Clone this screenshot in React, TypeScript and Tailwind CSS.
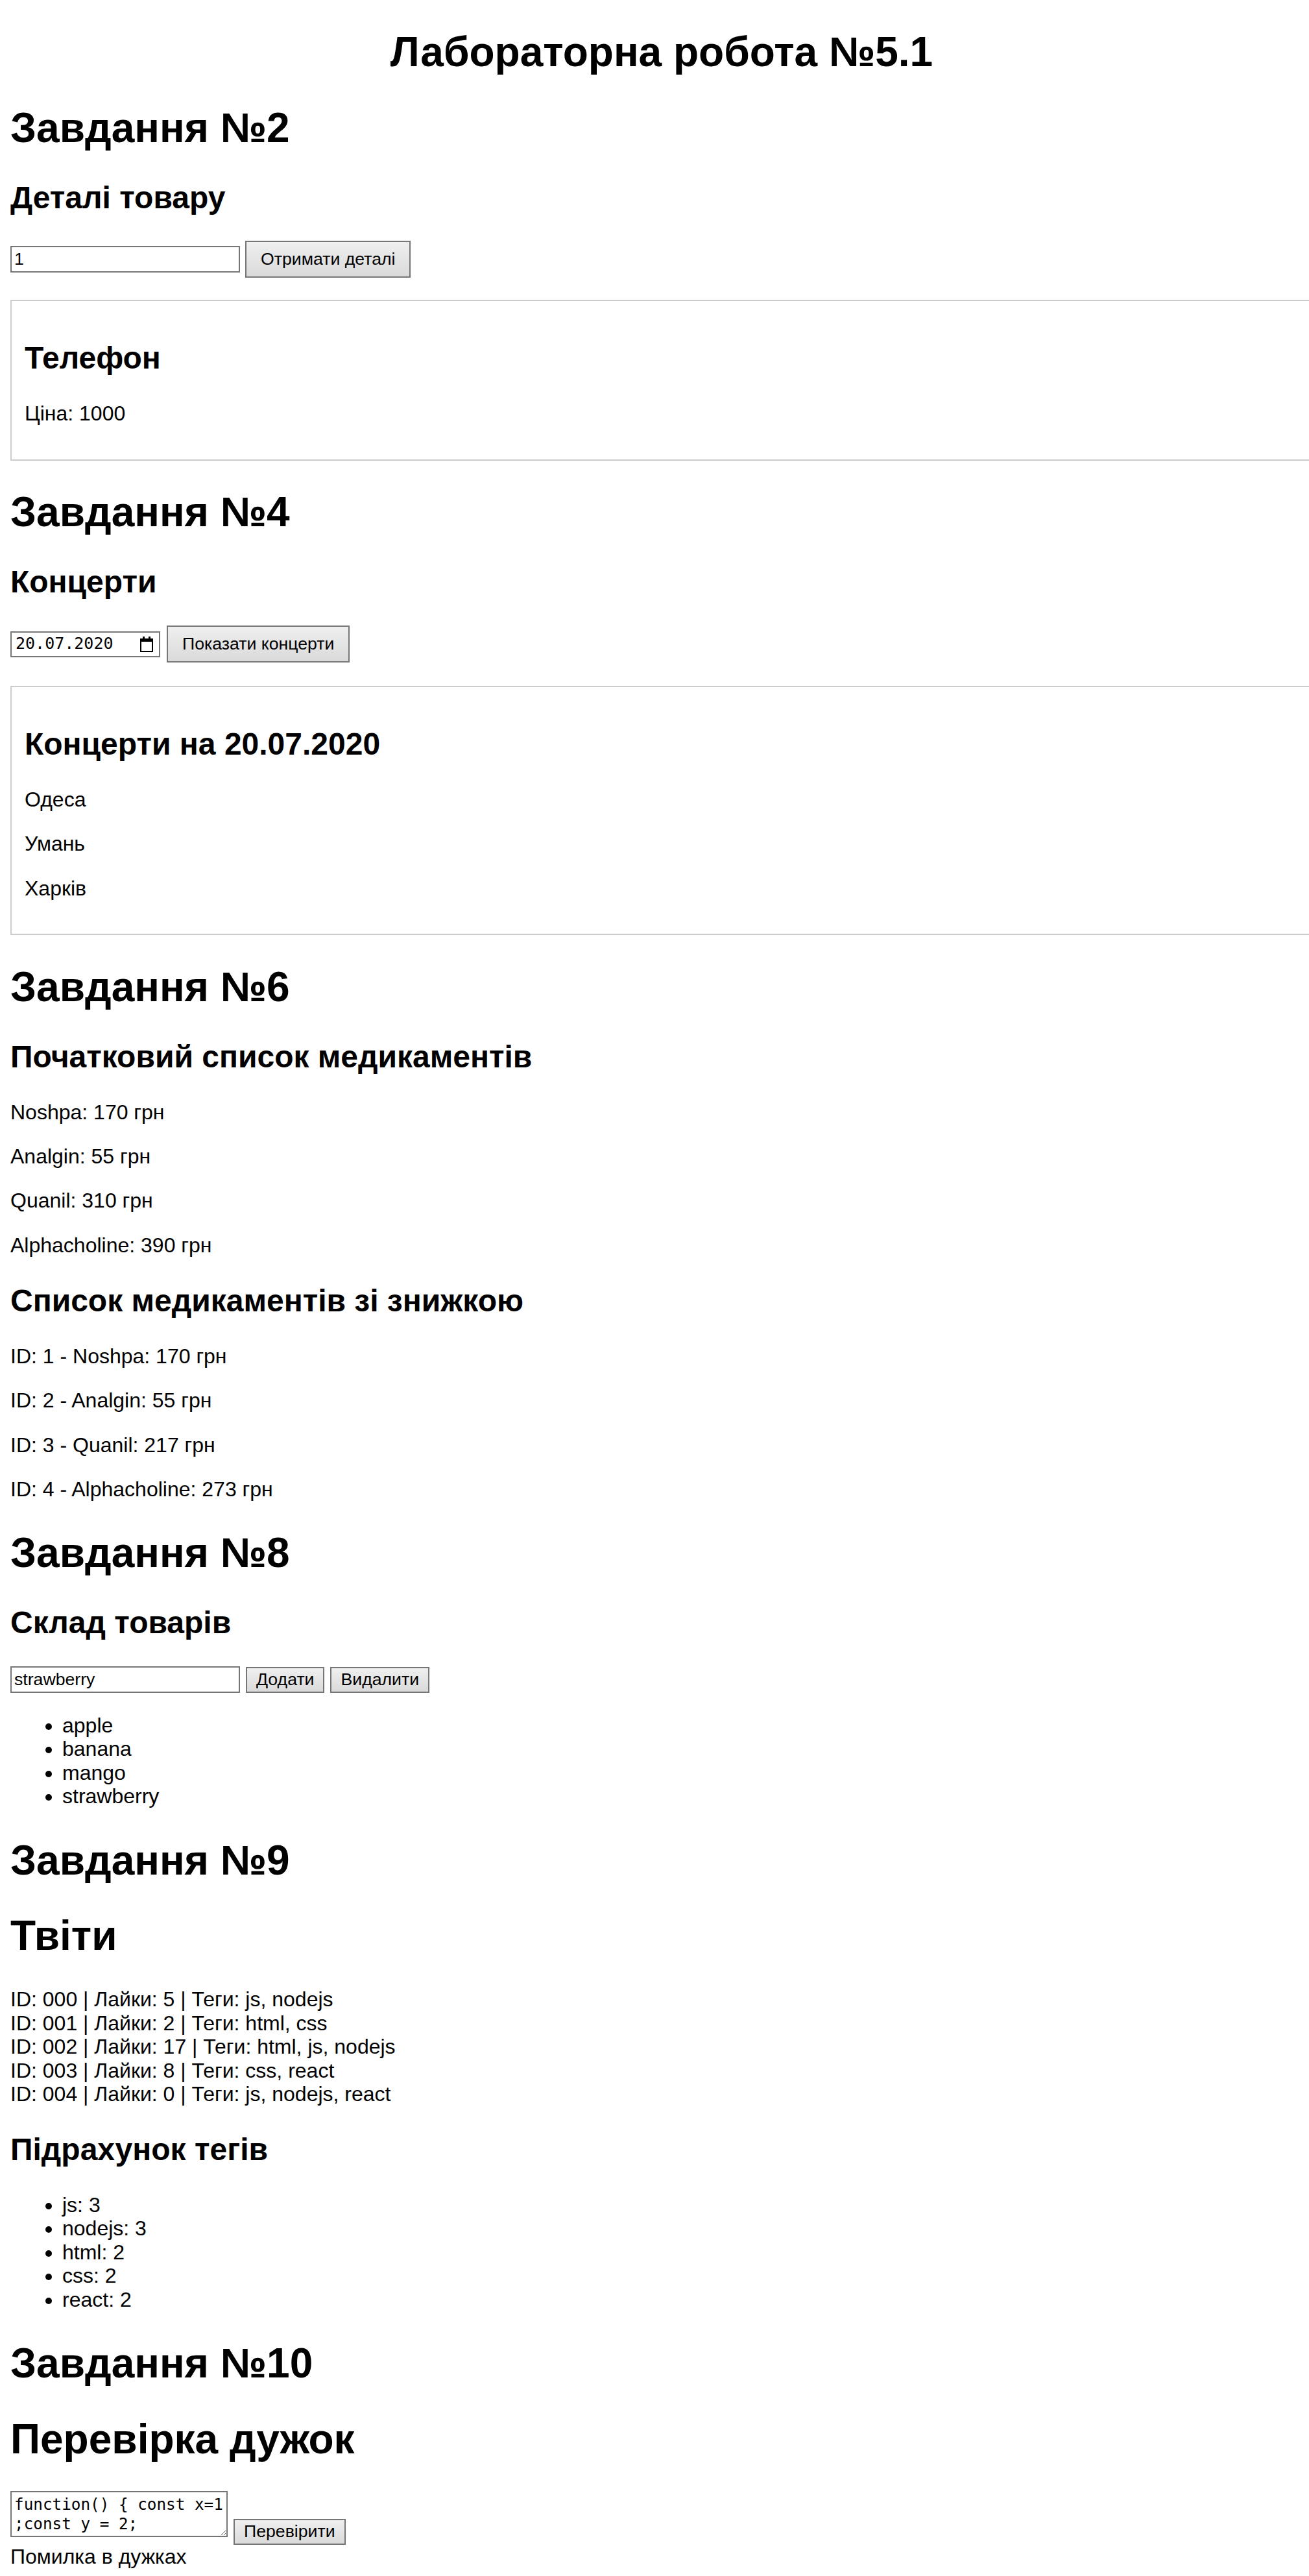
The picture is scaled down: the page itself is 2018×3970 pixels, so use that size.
import React from "react"

const h1 = "text-[64px] font-bold leading-[normal] my-[42.88px]"
const h2 = "text-[48px] font-bold leading-[normal] my-[39.84px]"
const p = "my-[32px]"
const field = "h-[41px] w-[354px] border-2 border-[#767676] bg-white px-[4px] text-[26.67px] outline-none"
const bigBtn =
  "h-[57px] px-[22px] border-2 border-[#767676] bg-linear-to-b from-[#efefef] to-[#dadada] text-[26.67px] leading-[31px]"
const btn =
  "h-[40px] px-[14px] border-2 border-[#767676] bg-linear-to-b from-[#efefef] to-[#dadada] text-[26.67px] leading-[31px]"

const meds = [
  { name: "Noshpa", price: 170 },
  { name: "Analgin", price: 55 },
  { name: "Quanil", price: 310 },
  { name: "Alphacholine", price: 390 },
]

const discounted = [
  { id: 1, name: "Noshpa", price: 170 },
  { id: 2, name: "Analgin", price: 55 },
  { id: 3, name: "Quanil", price: 217 },
  { id: 4, name: "Alphacholine", price: 273 },
]

const tweets = [
  { id: "000", likes: 5, tags: ["js", "nodejs"] },
  { id: "001", likes: 2, tags: ["html", "css"] },
  { id: "002", likes: 17, tags: ["html", "js", "nodejs"] },
  { id: "003", likes: 8, tags: ["css", "react"] },
  { id: "004", likes: 0, tags: ["js", "nodejs", "react"] },
]

function CalendarIcon() {
  return (
    <svg width="20" height="24" viewBox="0 0 20 24" fill="none">
      <rect x="1" y="4" width="18" height="19" stroke="black" strokeWidth="2" />
      <rect x="1" y="4" width="18" height="4" fill="black" />
      <rect x="4" y="0" width="3" height="5" fill="black" />
      <rect x="13" y="0" width="3" height="5" fill="black" />
    </svg>
  )
}

export default function App() {
  const tagCount: Record<string, number> = {}
  tweets.forEach((t) => t.tags.forEach((tag) => (tagCount[tag] = (tagCount[tag] || 0) + 1)))

  return (
    <div className="w-full overflow-hidden bg-white text-black font-['Liberation_Sans',Arial,sans-serif] text-[32px] leading-[36.4px]">
      <div className="w-[2040px] px-4 pb-4">
        <h1 className={`${h1} text-center`}>Лабораторна робота №5.1</h1>

        {/* Завдання 2 */}
        <h1 className={h1}>Завдання №2</h1>
        <h2 className={h2}>Деталі товару</h2>
        <div className="flex items-center gap-[8px]">
          <input className={field} defaultValue="1" />
          <button className={bigBtn}>Отримати деталі</button>
        </div>
        <div className="mt-[34px] border-2 border-[#cccccc] p-[20px]">
          <h2 className={h2}>Телефон</h2>
          <p className={p}>Ціна: 1000</p>
        </div>

        {/* Завдання 4 */}
        <h1 className={h1}>Завдання №4</h1>
        <h2 className={h2}>Концерти</h2>
        <div className="flex items-center gap-[10px]">
          <div className="flex h-[40px] w-[231px] items-center justify-between border-2 border-[#767676] pl-[6px] pr-[9px]">
            <span className="font-['DejaVu_Sans_Mono',monospace] text-[25px]">20.07.2020</span>
            <CalendarIcon />
          </div>
          <button className={bigBtn}>Показати концерти</button>
        </div>
        <div className="mt-[36px] border-2 border-[#cccccc] p-[20px]">
          <h2 className={h2}>Концерти на 20.07.2020</h2>
          <p className={p}>Одеса</p>
          <p className={p}>Умань</p>
          <p className={p}>Харків</p>
        </div>

        {/* Завдання 6 */}
        <h1 className={h1}>Завдання №6</h1>
        <h2 className={h2}>Початковий список медикаментів</h2>
        {meds.map((m) => (
          <p key={m.name} className={p}>
            {m.name}: {m.price} грн
          </p>
        ))}
        <h2 className={h2}>Список медикаментів зі знижкою</h2>
        {discounted.map((m) => (
          <p key={m.id} className={p}>
            ID: {m.id} - {m.name}: {m.price} грн
          </p>
        ))}

        {/* Завдання 8 */}
        <h1 className={h1}>Завдання №8</h1>
        <h2 className={h2}>Склад товарів</h2>
        <div className="flex items-center gap-[9px]">
          <input className={`${field} h-[40px]`} defaultValue="strawberry" />
          <button className={btn}>Додати</button>
          <button className={btn}>Видалити</button>
        </div>
        <ul className="my-[32px] list-disc pl-[80px]">
          <li>apple</li>
          <li>banana</li>
          <li>mango</li>
          <li>strawberry</li>
        </ul>

        {/* Завдання 9 */}
        <h1 className={h1}>Завдання №9</h1>
        <h1 className={h1}>Твіти</h1>
        {tweets.map((t) => (
          <div key={t.id}>
            ID: {t.id} | Лайки: {t.likes} | Теги: {t.tags.join(", ")}
          </div>
        ))}
        <h2 className={h2}>Підрахунок тегів</h2>
        <ul className="my-[32px] list-disc pl-[80px]">
          {Object.entries(tagCount).map(([tag, n]) => (
            <li key={tag}>
              {tag}: {n}
            </li>
          ))}
        </ul>

        {/* Завдання 10 */}
        <h1 className={h1}>Завдання №10</h1>
        <h1 className={h1}>Перевірка дужок</h1>
        <div className="flex items-end gap-[9px]">
          <textarea
            wrap="off"
            rows={2}
            className="mb-[12px] h-[71px] w-[335px] overflow-hidden whitespace-pre border-2 border-[#767676] p-[4px] font-['DejaVu_Sans_Mono',monospace] text-[24.3px] leading-[30px] outline-none"
            defaultValue={"function() { const x=1\n;const y = 2;"}
          />
          <button className={btn}>Перевірити</button>
        </div>
        <div>Помилка в дужках</div>
      </div>
    </div>
  )
}
